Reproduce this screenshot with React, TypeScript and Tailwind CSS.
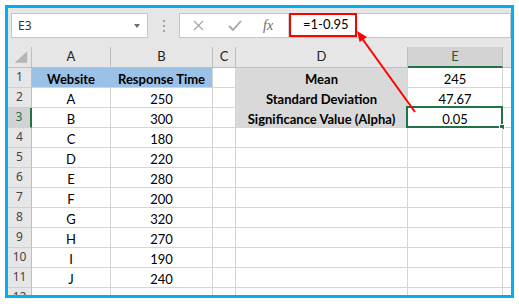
import React from "react";

const cols = [
  { key: "A", w: "w-[79px]" },
  { key: "B", w: "w-[102px]" },
  { key: "C", w: "w-[23px]" },
  { key: "D", w: "w-[172px]" },
  { key: "E", w: "w-[95px]" },
];

const rows: string[][] = [
  ["Website", "Response Time", "", "Mean", "245"],
  ["A", "250", "", "Standard Deviation", "47.67"],
  ["B", "300", "", "Significance Value (Alpha)", "0.05"],
  ["C", "180", "", "", ""],
  ["D", "220", "", "", ""],
  ["E", "280", "", "", ""],
  ["F", "200", "", "", ""],
  ["G", "320", "", "", ""],
  ["H", "270", "", "", ""],
  ["I", "190", "", "", ""],
  ["J", "240", "", "", ""],
  ["", "", "", "", ""],
];

function cellClass(r: number, c: number) {
  if (r === 0 && c === 0) return "bg-[#9bc2e6] border-r-[#9bc2e6] font-bold";
  if (r === 0 && c === 1) return "bg-[#9bc2e6] font-bold";
  if (c === 3 && r < 3) return "bg-[#d9d9d9] font-bold";
  return "bg-white";
}

function ToolBar() {
  return (
    <div className="h-[39px] shrink-0 flex items-start pt-[5px] pl-[3px] bg-[#e6e6e6]">
      <div className="w-[137px] h-[25px] bg-white border border-[#c6c6c6] flex items-center justify-between pl-[6px] pr-[7px]">
        <span className="text-[12px] text-[#333] font-['Noto_Sans',sans-serif]">E3</span>
        <svg width="6" height="4" viewBox="0 0 6 4">
          <polygon points="0,0 6,0 3,4" fill="#6d6d6d" />
        </svg>
      </div>
      <div className="w-[31px] h-[25px] flex flex-col items-center justify-center gap-[3px]">
        <span className="w-[2px] h-[2px] bg-[#a0a0a0]" />
        <span className="w-[2px] h-[2px] bg-[#a0a0a0]" />
        <span className="w-[2px] h-[2px] bg-[#a0a0a0]" />
      </div>
      <div className="flex-1 h-[25px] bg-white border border-[#c6c6c6] flex">
        <div className="w-[109px] h-full flex items-center border-r border-[#d4d4d4]">
          <svg className="ml-[13px]" width="11" height="11" viewBox="0 0 11 11">
            <path d="M1 1L10 10M10 1L1 10" stroke="#a6a6a6" strokeWidth="1.2" />
          </svg>
          <svg className="ml-[24px]" width="14" height="11" viewBox="0 0 14 11">
            <path d="M1 6L5 10L13 1" stroke="#a6a6a6" strokeWidth="1.8" fill="none" />
          </svg>
          <span className="ml-[21px] text-[14px] italic text-[#6b6b6b] font-['Liberation_Serif',serif]">fx</span>
        </div>
        <div className="relative flex-1 h-full">
          <div className="absolute left-0 top-[-1px] w-[68px] h-[24px] border-2 border-[#ff0000] flex items-center pl-[12px]">
            <span className="text-[13px] text-black font-['Lato',sans-serif]">=1-0.95</span>
          </div>
        </div>
      </div>
    </div>
  );
}

function Corner() {
  return (
    <div className="w-[24px] h-[21px] shrink-0 bg-[#e6e6e6] border-r border-b border-[#bfbfbf] flex items-end justify-end">
      <svg width="24" height="20" viewBox="0 0 24 20">
        <polygon points="7,16 20,16 20,4" fill="#b5b5b5" />
      </svg>
    </div>
  );
}

export default function App() {
  return (
    <div className="relative w-[519px] h-[304px] bg-white pt-[5px] pl-[5px] font-['Lato',sans-serif]">
      <div className="w-[509px] h-[293px] border-[3px] border-[#00b0f0] bg-[#e6e6e6] flex flex-col overflow-hidden">
        <ToolBar />
        <div className="flex-1 bg-white overflow-hidden">
          <div className="flex h-[21px]">
            <Corner />
            {cols.map((c) => (
              <div
                key={c.key}
                className={`${c.w} shrink-0 h-[21px] flex items-center justify-center text-[13px] border-r ${
                  c.key === "E"
                    ? "bg-[#d2d2d2] text-[#1e5b37] border-b-2 border-b-[#217346] border-r-[#bfbfbf]"
                    : "bg-[#e6e6e6] text-[#222] border-b border-[#bfbfbf]"
                }`}
              >
                {c.key}
              </div>
            ))}
            <div className="flex-1 h-[21px] bg-[#e6e6e6] border-b border-[#bfbfbf]" />
          </div>
          {rows.map((row, r) => (
            <div key={r} className="flex h-[20px]">
              <div
                className={`w-[24px] shrink-0 h-[20px] flex items-end justify-center pb-[1px] text-[12px] font-['Noto_Sans',sans-serif] border-b border-b-[#d0d0d0] ${
                  r === 2
                    ? "bg-[#d2d2d2] text-[#217346] border-r-2 border-r-[#217346]"
                    : "bg-[#e6e6e6] text-[#444] border-r border-r-[#bfbfbf]"
                }`}
              >
                {r + 1}
              </div>
              {cols.map((c, ci) => (
                <div
                  key={c.key}
                  className={`${c.w} ${cellClass(r, ci)} relative shrink-0 h-[20px] flex items-end justify-center text-[13px] leading-[16px] text-black whitespace-nowrap border-r border-b border-[#d4d4d4] ${
                    r === 0 && ci === 0 ? "border-r-[#9bc2e6]" : ""
                  } ${ci === 3 && r < 2 ? "border-b-[#d9d9d9]" : ""}`}
                >
                  {row[ci]}
                  {r === 2 && ci === 4 && (
                    <div className="absolute left-[-2px] top-[-2px] w-[97px] h-[22px] border-2 border-[#217346]">
                      <div className="absolute right-[-4px] bottom-[-4px] w-[6px] h-[6px] bg-[#217346] border border-white" />
                    </div>
                  )}
                </div>
              ))}
              <div className="flex-1 h-[20px] bg-white border-b border-[#d4d4d4]" />
            </div>
          ))}
        </div>
      </div>
      <svg className="absolute inset-0 pointer-events-none" width="519" height="304" viewBox="0 0 519 304">
        <line x1="415" y1="112" x2="361" y2="37" stroke="#ff0000" strokeWidth="2" />
        <polygon points="357,31 359.6,42 367,37" fill="#ff0000" />
      </svg>
    </div>
  );
}
